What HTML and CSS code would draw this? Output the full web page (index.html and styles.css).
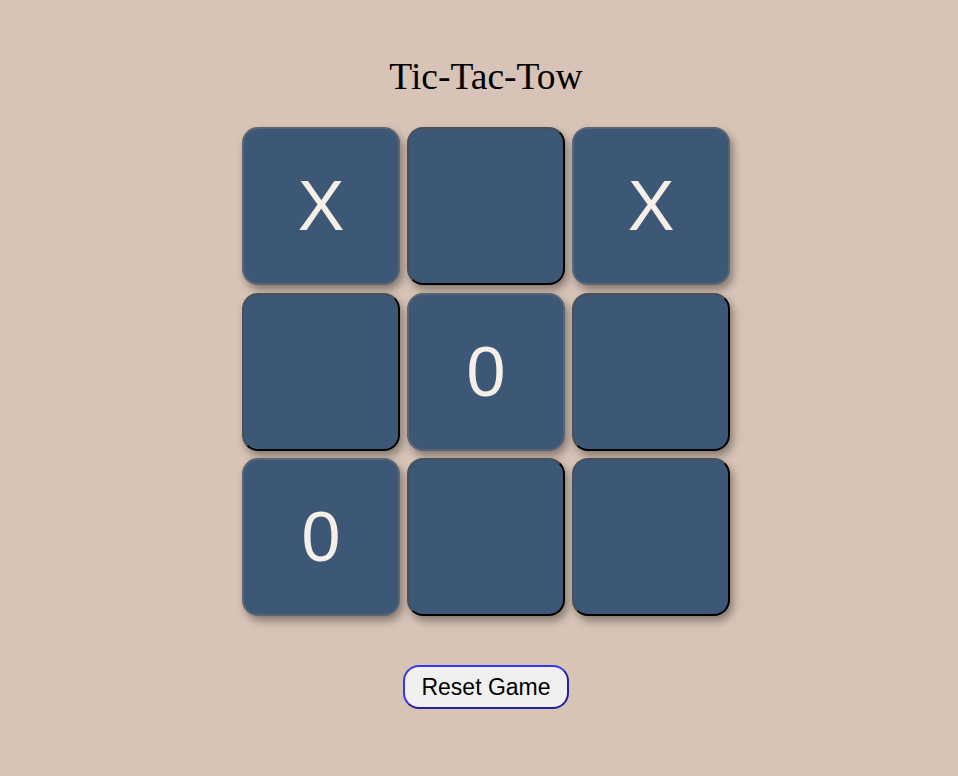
FILE: index.html
```html
<!DOCTYPE html>
<html lang="en">
<head>
<meta charset="UTF-8">
<title>Tic-Tac-Tow</title>
<link rel="stylesheet" href="styles.css">
</head>
<body>
<main class="page">
  <h1 class="title">Tic-Tac-Tow</h1>
  <div class="board">
    <button class="box filled">X</button>
    <button class="box"></button>
    <button class="box filled">X</button>
    <button class="box"></button>
    <button class="box filled">0</button>
    <button class="box"></button>
    <button class="box filled">0</button>
    <button class="box"></button>
    <button class="box"></button>
  </div>
  <button class="reset">Reset Game</button>
</main>
</body>
</html>
```
FILE: styles.css
```css
html, body {
  margin: 0;
  padding: 0;
  background: #d8c4b7;
}

.page {
  display: flex;
  flex-direction: column;
  align-items: center;
  padding: 56px 0 0 14px;
}

.title {
  margin: 0;
  font-family: "Liberation Serif", "Times New Roman", serif;
  font-weight: normal;
  font-size: 37.5px;
  line-height: 41px;
  color: #000;
}

.board {
  margin-top: 30px;
  display: grid;
  grid-template-columns: repeat(3, 158px);
  grid-template-rows: repeat(3, 158px);
  column-gap: 7px;
  row-gap: 7.5px;
}

.box {
  box-sizing: border-box;
  width: 158px;
  height: 158px;
  padding: 0;
  background: #3d5876;
  border: 2px solid;
  border-color: #4b4f56 #000 #000 #4b4f56;
  border-radius: 16px;
  box-shadow: 3px 5px 9px rgba(0, 0, 0, 0.38);
  font-family: "Liberation Sans", Arial, sans-serif;
  font-size: 70px;
  color: #f6efe7;
  line-height: 1;
}

.box.filled {
  border-color: #5a6574;
}

.reset {
  margin-top: 49px;
  box-sizing: border-box;
  height: 44px;
  padding: 0 16.5px;
  background: #f0f0f0;
  border: 2px solid;
  border-color: #3535f0 #22229a #22229a #3535f0;
  border-radius: 16px;
  font-family: "Liberation Sans", Arial, sans-serif;
  font-size: 23px;
  color: #000;
}
```
